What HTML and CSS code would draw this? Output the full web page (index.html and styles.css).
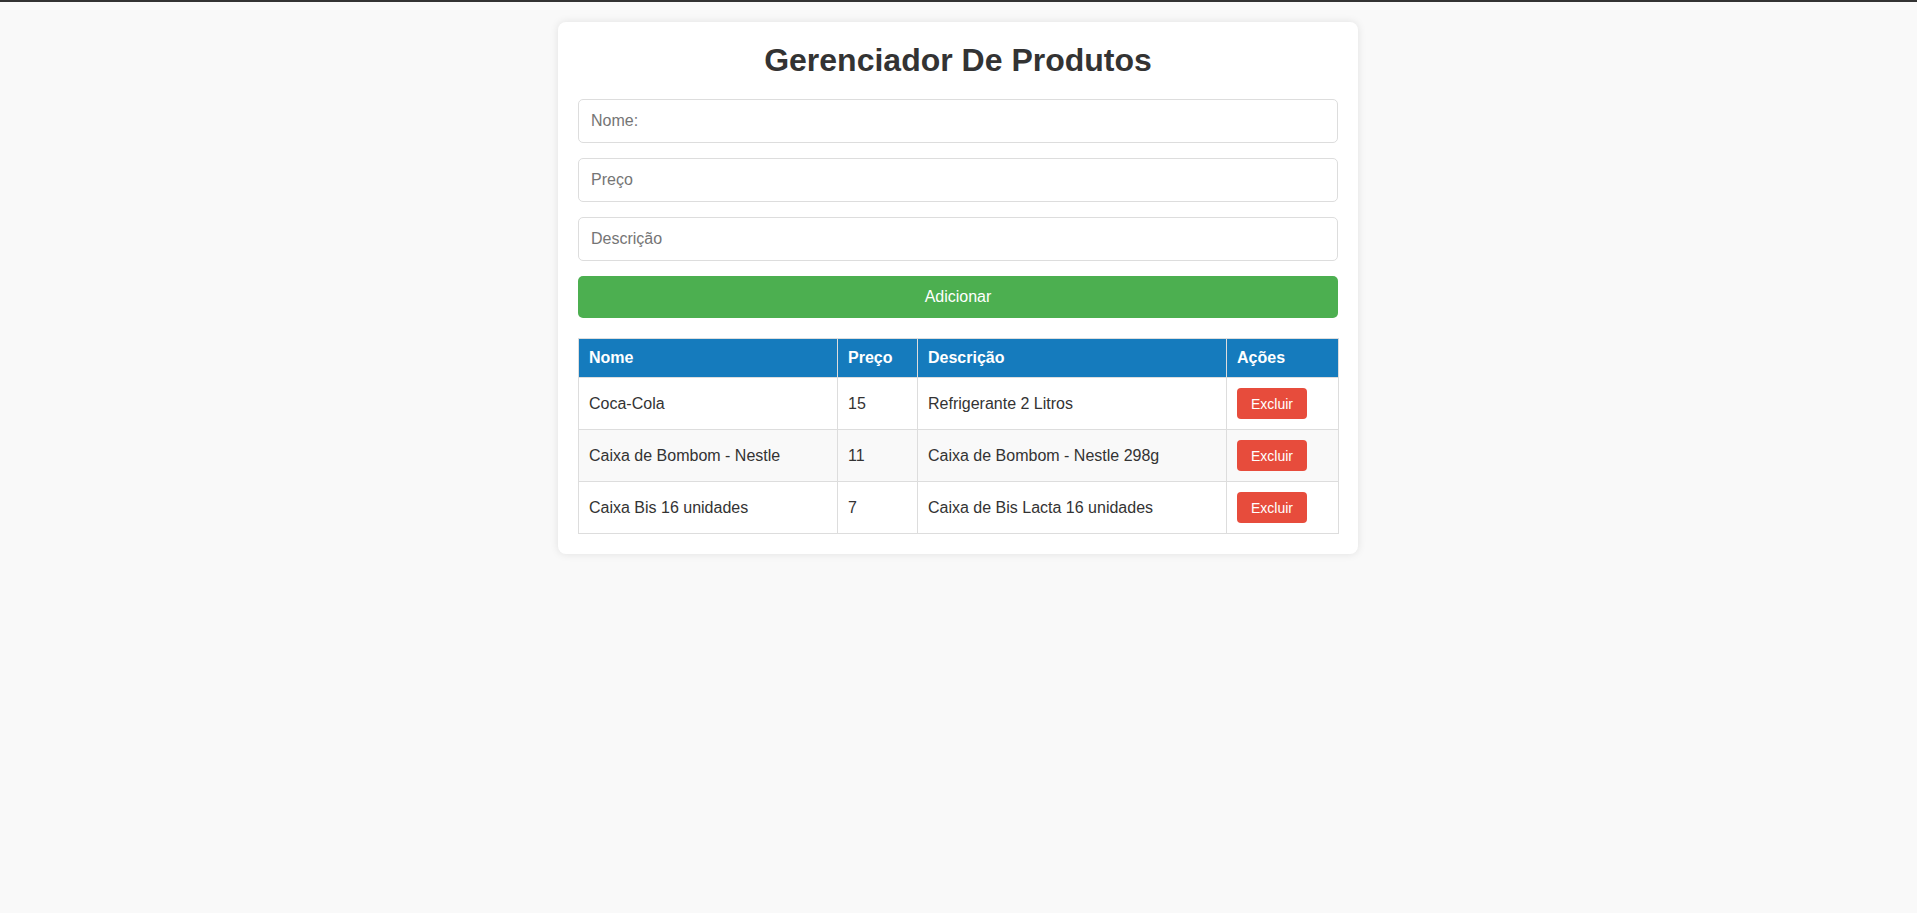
FILE: index.html
```html
<!DOCTYPE html>
<html lang="pt-BR">
<head>
<meta charset="utf-8">
<title>Gerenciador De Produtos</title>
<link rel="stylesheet" href="styles.css">
</head>
<body>
<div class="container">
  <h1 class="title">Gerenciador De Produtos</h1>
  <form class="form">
    <input class="field" type="text" placeholder="Nome:">
    <input class="field" type="text" placeholder="Preço">
    <input class="field" type="text" placeholder="Descrição">
    <button class="btn-add" type="button">Adicionar</button>
  </form>
  <table class="table">
    <colgroup>
      <col class="c-nome">
      <col class="c-preco">
      <col class="c-desc">
      <col class="c-acoes">
    </colgroup>
    <thead>
      <tr><th>Nome</th><th>Preço</th><th>Descrição</th><th>Ações</th></tr>
    </thead>
    <tbody>
      <tr><td>Coca-Cola</td><td>15</td><td>Refrigerante 2 Litros</td><td><button class="btn-del" type="button">Excluir</button></td></tr>
      <tr><td>Caixa de Bombom - Nestle</td><td>11</td><td>Caixa de Bombom - Nestle 298g</td><td><button class="btn-del" type="button">Excluir</button></td></tr>
      <tr><td>Caixa Bis 16 unidades</td><td>7</td><td>Caixa de Bis Lacta 16 unidades</td><td><button class="btn-del" type="button">Excluir</button></td></tr>
    </tbody>
  </table>
</div>
</body>
</html>
```
FILE: styles.css
```css
* { box-sizing: border-box; }
html, body { margin: 0; }
body {
  background: #f9f9f9;
  border-top: 2px solid #333;
  padding: 20px 1px 20px 0;
  font-family: "Liberation Sans", Arial, sans-serif;
  color: #333;
  min-height: 100vh;
}
.container {
  width: 800px;
  margin: 0 auto;
  background: #fff;
  padding: 20px;
  border-radius: 8px;
  box-shadow: 0 0 8px rgba(0,0,0,0.1);
}
.title {
  margin: 0 0 20px;
  text-align: center;
  font-size: 32px;
  line-height: 37px;
  font-weight: bold;
  color: #333;
}
.form {
  display: flex;
  flex-direction: column;
  gap: 15px;
}
.field {
  width: 100%;
  height: 44px;
  padding: 0 12px;
  font-family: "Liberation Sans", Arial, sans-serif;
  font-size: 16px;
  border: 1px solid #ddd;
  border-radius: 5px;
  color: #333;
  outline: none;
}
.field::placeholder { color: #757575; }
.btn-add {
  width: 100%;
  height: 42px;
  border: none;
  border-radius: 5px;
  background: #4caf50;
  color: #fff;
  font-family: "Liberation Sans", Arial, sans-serif;
  font-size: 16px;
  cursor: pointer;
}
.table {
  width: 100%;
  margin-top: 20px;
  border-collapse: collapse;
  table-layout: fixed;
}
.c-nome { width: 259px; }
.c-preco { width: 80px; }
.c-desc { width: 309px; }
.c-acoes { width: 112px; }
.table th, .table td {
  border: 1px solid #ddd;
  padding: 10px;
  text-align: left;
  font-size: 16px;
  line-height: 18px;
}
.table th {
  background: #157bbd;
  color: #fff;
  font-weight: bold;
}
.table td { height: 52px; }
.table tbody tr:nth-child(even) { background: #f9f9f9; }
.btn-del {
  background: #e74c3c;
  color: #fff;
  border: none;
  border-radius: 4px;
  width: 70px;
  height: 31px;
  padding: 0;
  font-family: "Liberation Sans", Arial, sans-serif;
  font-size: 14px;
  line-height: 16px;
  cursor: pointer;
  display: block;
}
```
